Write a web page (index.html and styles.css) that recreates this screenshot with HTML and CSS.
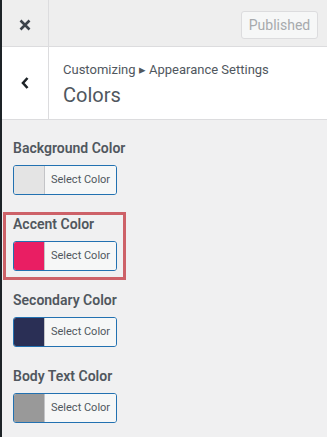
FILE: index.html
```html
<!DOCTYPE html>
<html lang="en">
<head>
  <meta charset="UTF-8">
  <meta name="viewport" content="width=device-width, initial-scale=1.0">
  <title>Customizer - Colors</title>
  <link rel="stylesheet" href="styles.css">
</head>
<body>

  <div class="customizer">
    <div class="header">
      <button class="close" aria-label="Close">
        <svg width="12" height="12" viewBox="0 0 12 12">
          <path d="M1.5 1.5 L10.5 10.5 M10.5 1.5 L1.5 10.5" stroke="#3c434a" stroke-width="2.6" stroke-linecap="butt"/>
        </svg>
      </button>
      <button class="publish" disabled>Published</button>
    </div>

    <div class="section-title">
      <button class="back" aria-label="Back">
        <svg width="10" height="14" viewBox="0 0 10 14">
          <path d="M7.5 2 L3 7 L7.5 12" fill="none" stroke="#1d2327" stroke-width="2.6"/>
        </svg>
      </button>
      <div class="title-text">
        <span class="crumbs">Customizing &#9656; Appearance Settings</span>
        <h3>Colors</h3>
      </div>
    </div>

    <ul class="controls">
      <li class="control">
        <span class="label">Background Color</span>
        <button class="color-btn"><span class="swatch" style="background:#e4e4e4"></span><span class="btn-text">Select Color</span></button>
      </li>
      <li class="control highlight">
        <span class="label">Accent Color</span>
        <button class="color-btn"><span class="swatch" style="background:#e91e63"></span><span class="btn-text">Select Color</span></button>
      </li>
      <li class="control">
        <span class="label">Secondary Color</span>
        <button class="color-btn"><span class="swatch" style="background:#2a2f55"></span><span class="btn-text">Select Color</span></button>
      </li>
      <li class="control">
        <span class="label">Body Text Color</span>
        <button class="color-btn"><span class="swatch" style="background:#999999"></span><span class="btn-text">Select Color</span></button>
      </li>
    </ul>
  </div>

</body>
</html>
```

FILE: styles.css
```css
* {
  box-sizing: border-box;
}
body, html {
  margin: 0;
  padding: 0;
  font-family: Roboto, "Liberation Sans", sans-serif;
  background: #f0f0f1;
}

button {
  font-family: inherit;
  cursor: pointer;
}

.customizer {
  min-height: 100vh;
  border-left: 2px solid #1d2327;
  background: #f0f0f1;
}

/* top bar */
.header {
  display: flex;
  height: 47px;
  background: #eeeeee;
  border-bottom: 1px solid #dcdcde;
}

.close {
  width: 47px;
  padding: 4px 0 0 0;
  border: 0;
  border-right: 1px solid #dcdcde;
  background: transparent;
  display: flex;
  align-items: center;
  justify-content: center;
}

.publish {
  margin: 11px 9px 0 auto;
  height: 28px;
  width: 77px;
  padding: 0;
  font-size: 14px;
  color: #a7aaad;
  background: #f6f7f7;
  border: 1px solid #dcdcde;
  border-radius: 3px;
  cursor: default;
}

/* section heading */
.section-title {
  display: flex;
  height: 73px;
  background: #ffffff;
  border-bottom: 1px solid #dcdcde;
}

.back {
  width: 47px;
  padding: 0;
  border: 0;
  border-right: 1px solid #dcdcde;
  background: transparent;
  display: flex;
  align-items: center;
  justify-content: center;
}

.title-text {
  padding: 15px 0 0 14px;
  color: #50575e;
}

.crumbs {
  display: block;
  font-size: 13px;
  line-height: 16px;
}

.title-text h3 {
  margin: 5px 0 0 0;
  font-size: 20px;
  font-weight: 400;
  line-height: 24px;
}

/* color controls */
.controls {
  list-style: none;
  margin: 0;
  padding: 18px 0 0 11px;
}

.control {
  position: relative;
  margin-bottom: 19px;
}

.label {
  display: block;
  font-size: 14px;
  font-weight: 600;
  line-height: 20px;
  color: #50575e;
  margin-bottom: 7px;
}

.color-btn {
  display: flex;
  height: 30px;
  width: 104px;
  padding: 0;
  border: 1px solid #2271b1;
  border-radius: 3px;
  overflow: hidden;
  background: #f6f7f7;
}

.swatch {
  width: 30px;
  height: 100%;
}

.btn-text {
  flex: 1;
  height: 100%;
  border-left: 1px solid #c3c4c7;
  background: #f6f7f7;
  font-size: 11px;
  line-height: 28px;
  color: #50575e;
  text-align: left;
  padding-left: 6px;
}

.highlight::after {
  content: "";
  position: absolute;
  top: -2px;
  left: -10px;
  bottom: -9px;
  width: 117px;
  border: 3px solid #cd6168;
}
```
